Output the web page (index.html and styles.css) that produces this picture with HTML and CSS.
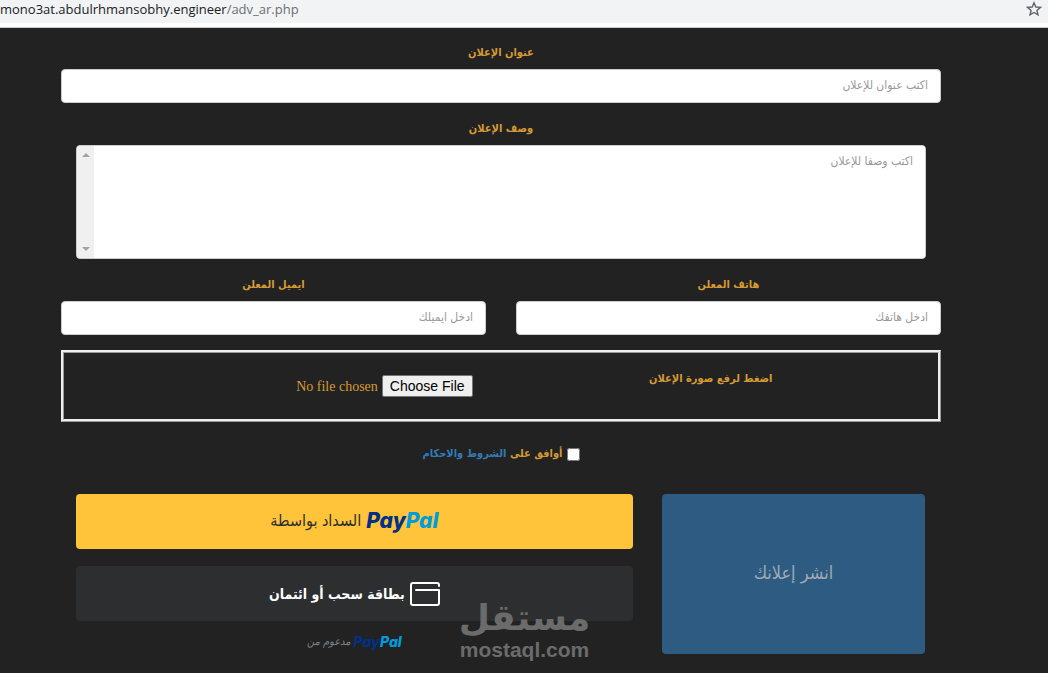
FILE: index.html
```
<!DOCTYPE html>
<html lang="ar" dir="rtl">
<head>
  <meta charset="UTF-8">
  <meta name="viewport" content="width=device-width, initial-scale=1.0">
  <title>أضف إعلان</title>
  <link rel="stylesheet" href="styles.css">
</head>
<body>
  <header class="address-bar" dir="ltr">
    <span class="url">mono3at.abdulrhmansobhy.engineer<span class="path">/adv_ar.php</span></span>
    <button type="button" class="star" aria-label="Bookmark">
      <svg width="16" height="16" viewBox="0 0 16 16" fill="none" stroke="#5f6368" stroke-width="1.4" stroke-linejoin="miter">
        <path d="M8 1.8 L9.8 6 L14.4 6.4 L10.9 9.4 L12 13.9 L8 11.5 L4 13.9 L5.1 9.4 L1.6 6.4 L6.2 6 Z"/>
      </svg>
    </button>
  </header>

  <main>
    <form class="container">
      <div class="form-group">
        <label for="title">عنوان الإعلان</label>
        <input type="text" id="title" class="form-control" placeholder="اكتب عنوان للإعلان">
      </div>

      <div class="form-group inset">
        <label for="description">وصف الإعلان</label>
        <div class="textarea-box">
          <textarea id="description" placeholder="اكتب وصفا للإعلان"></textarea>
          <div class="scrollbar">
            <svg width="8" height="4" viewBox="0 0 8 4"><path d="M0 4 L4 0 L8 4 Z" fill="#a3a3a3"/></svg>
            <svg width="8" height="4" viewBox="0 0 8 4"><path d="M0 0 L4 4 L8 0 Z" fill="#a3a3a3"/></svg>
          </div>
        </div>
      </div>

      <div class="row">
        <div class="form-group">
          <label for="phone">هاتف المعلن</label>
          <input type="text" id="phone" class="form-control" placeholder="ادخل هاتفك">
        </div>
        <div class="form-group">
          <label for="email">ايميل المعلن</label>
          <input type="text" id="email" class="form-control" placeholder="ادخل ايميلك">
        </div>
      </div>

      <div class="upload">
        <label for="image">اضغط لرفع صورة الإعلان</label>
        <input type="file" id="image">
      </div>

      <div class="terms">
        <input type="checkbox" id="agree">
        <label for="agree">أوافق على <a href="#">الشروط والاحكام</a></label>
      </div>

      <div class="actions">
        <button type="submit" class="publish" disabled>انشر إعلانك</button>
        <div class="payment">
          <button type="button" class="pay-btn pay-paypal">
            <span class="paypal" dir="ltr">Pay<span>Pal</span></span>
            <span>السداد بواسطة</span>
          </button>
          <button type="button" class="pay-btn pay-card">
            <svg width="30" height="24" viewBox="0 0 30 24" fill="none" stroke="#fff" stroke-width="2" stroke-linecap="round" stroke-linejoin="round">
              <path d="M29 4 V3 Q29 1 27 1 H3 Q1 1 1 3 V21 Q1 23 3 23 H27 Q29 23 29 21 V8 H6"/>
            </svg>
            <span>بطاقة سحب أو ائتمان</span>
          </button>
          <p class="powered">
            <span class="paypal" dir="ltr">Pay<span>Pal</span></span>
            <span class="powered-text">مدعوم من</span>
          </p>
        </div>
        <div class="watermark">
          <span class="watermark-ar">مستقل</span>
          <span class="watermark-en">mostaql.com</span>
        </div>
      </div>
    </form>
  </main>
</body>
</html>
```

FILE: styles.css
```
* {
  box-sizing: border-box;
}
body {
  margin: 0;
  background-color: #222;
  color: #d49a35;
  font-family: "DejaVu Sans Condensed", "DejaVu Sans", sans-serif;
  font-size: 11px;
}
button, input, textarea {
  font-family: inherit;
}
.address-bar {
  display: flex;
  justify-content: space-between;
  align-items: center;
  height: 28px;
  padding: 0 6px 9px 0;
  background: linear-gradient(#f1f3f4 23px, #fff 23px);
  border-bottom: 1px solid #ccc;
}
.url {
  color: #202124;
  font-family: "Open Sans", sans-serif;
  font-size: 13px;
  line-height: 18px;
}
.path {
  color: #6b6f73;
}
.star {
  display: flex;
  padding: 0;
  border: none;
  background: none;
}
.container {
  padding: 14px 107px 12px 61px;
}
.form-group {
  flex: 1;
  margin-bottom: 15px;
}
.form-group label {
  display: block;
  margin-bottom: 5px;
  line-height: 22px;
  font-weight: bold;
  text-align: center;
}
.inset {
  padding: 0 15px;
}
.form-control {
  display: block;
  width: 100%;
  height: 34px;
  padding: 4px 12px 6px;
  background: #fff;
  border: 1px solid #ccc;
  border-radius: 4px;
  font-size: 12px;
}
::placeholder {
  color: #999;
}
.textarea-box {
  display: flex;
  height: 114px;
  overflow: hidden;
  background: #fff;
  border: 1px solid #ccc;
  border-radius: 4px;
}
.textarea-box textarea {
  flex: 1;
  padding: 5px 12px;
  border: none;
  background: #fff;
  font-size: 12px;
  line-height: 20px;
  resize: none;
}
.scrollbar {
  display: flex;
  flex-direction: column;
  justify-content: space-between;
  align-items: center;
  width: 17px;
  padding: 7px 0;
  background: #f0f0f0;
}
.row {
  display: flex;
  gap: 30px;
}
.upload {
  display: grid;
  grid-template-columns: 52% 48%;
  align-items: start;
  height: 72px;
  padding-top: 15px;
  border: 3px ridge #eee;
}
.upload label {
  line-height: 22px;
  font-weight: bold;
  text-align: center;
}
.upload input {
  width: 100%;
  margin-top: 7px;
  padding-right: 11px;
  font-family: "Liberation Serif", serif;
  font-size: 14px;
}
.upload input::file-selector-button {
  height: 22px;
  padding: 0 7px;
  background: #efefef;
  border: 1px solid #767676;
  border-radius: 2px;
  color: #000;
  font-family: "Liberation Sans", sans-serif;
  font-size: 14px;
}
.terms {
  display: flex;
  justify-content: center;
  align-items: center;
  gap: 4px;
  margin: 22px 0 30px;
  line-height: 20px;
  font-weight: bold;
}
.terms input {
  width: 13px;
  height: 13px;
  margin: 0;
}
.terms a {
  color: #337ab7;
  text-decoration: none;
}
.actions {
  position: relative;
  display: flex;
  gap: 29px;
  padding: 0 16px 0 15px;
}
.publish {
  width: 31%;
  height: 160px;
  padding-bottom: 4px;
  background: #2d5b82;
  border: none;
  border-radius: 4px;
  color: #9fa9b3;
  font-size: 18px;
}
.payment {
  flex: 1;
}
.pay-btn {
  display: flex;
  justify-content: center;
  align-items: center;
  gap: 5px;
  width: 100%;
  height: 55px;
  border: none;
  border-radius: 4px;
  font-size: 16px;
}
.pay-paypal {
  margin-bottom: 17px;
  padding-bottom: 4px;
  background: #ffc439;
  color: #2c2e2f;
}
.pay-card {
  background: #2c2e2f;
  color: #fff;
  font-size: 14px;
  font-weight: bold;
}
.paypal {
  color: #003087;
  font-family: Inter, sans-serif;
  font-size: 21px;
  font-style: italic;
  font-weight: 800;
}
.paypal span {
  color: #009cde;
}
.powered {
  display: flex;
  justify-content: center;
  align-items: center;
  gap: 3px;
  margin: 11px 0 0;
  line-height: 20px;
}
.powered .paypal {
  font-size: 14px;
}
.powered-text {
  color: #7b8388;
  font-size: 11px;
  font-style: italic;
}
.watermark {
  position: absolute;
  top: 104px;
  left: 400px;
  display: flex;
  flex-direction: column;
  align-items: center;
  width: 127px;
  color: #6b6b6b;
  font-family: "DejaVu Sans", sans-serif;
  font-weight: bold;
}
.watermark-ar {
  font-size: 36px;
  line-height: 40px;
}
.watermark-en {
  font-family: "Liberation Sans", sans-serif;
  font-size: 21px;
  line-height: 24px;
}
```
